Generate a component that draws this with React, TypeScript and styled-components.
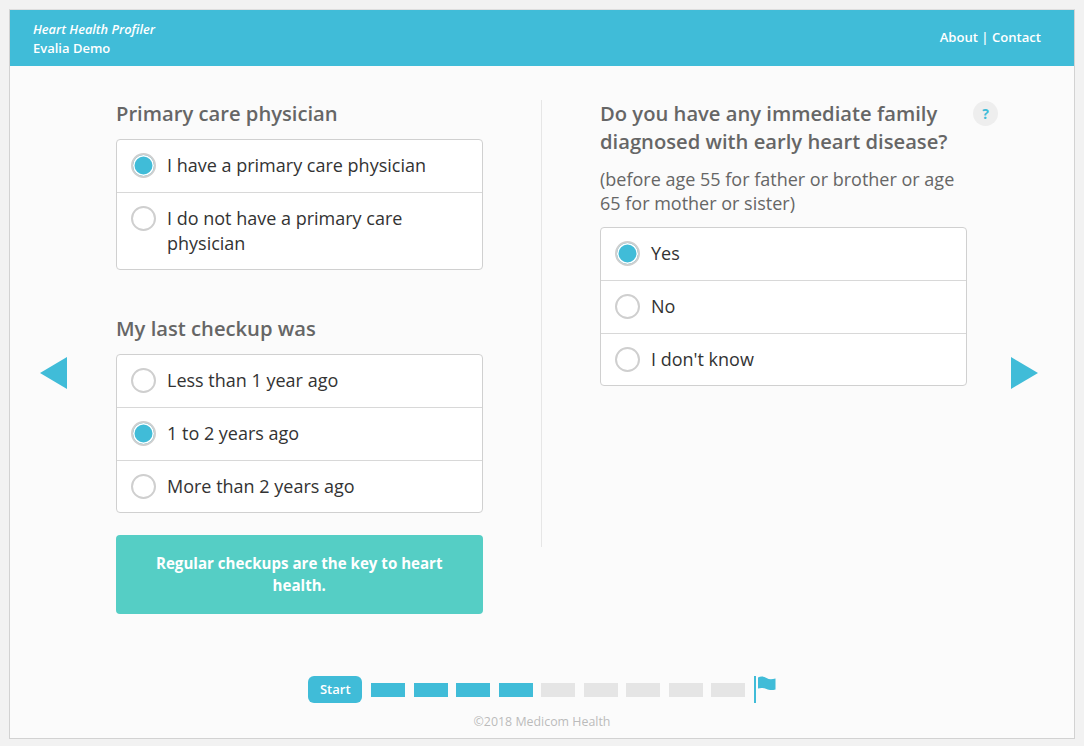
import React from 'react';
import styled, { createGlobalStyle } from 'styled-components';

const BLUE = '#40bcd8';

const GlobalStyle = createGlobalStyle`
  html, body {
    margin: 0;
    padding: 0;
    background: #f2f2f2;
    font-family: "Open Sans", "Noto Sans", sans-serif;
  }
  * { box-sizing: border-box; }
`;

const Frame = styled.div`
  width: 1066px;
  height: 730px;
  margin: 9px 0 0 9px;
  border: 1px solid #d2d2d2;
  border-top-color: #dedede;
  background: #fbfbfb;
  display: flex;
  flex-direction: column;
`;

const Header = styled.header`
  height: 56px;
  background: ${BLUE};
  color: #fff;
  display: flex;
  justify-content: space-between;
  align-items: center;
  padding: 0 33px 0 23px;
  font-size: 13px;
  font-weight: 600;
`;

const Brand = styled.div`
  line-height: 19px;
  margin-top: 1px;
`;

const BrandTitle = styled.div`
  font-size: 12.8px;
  font-style: italic;
`;

const Links = styled.nav`
  font-size: 13.1px;
  margin-top: -3px;
`;

const Main = styled.main`
  flex: 1;
  display: flex;
  align-items: center;
  padding: 0 36px 0 30px;
`;

const Arrow = styled.svg`
  width: 27px;
  height: 32px;
  flex: none;
  fill: ${BLUE};
`;

const Columns = styled.div`
  flex: 1;
  display: flex;
  align-self: flex-start;
  margin: 34px 0 0 49px;
`;

const Column = styled.section`
  position: relative;
  width: 366.5px;
  flex: none;
`;

const Divider = styled.div`
  width: 1px;
  height: 447px;
  margin: 0 58px 0 58.5px;
  background: #e6e6e6;
`;

const Title = styled.h2`
  margin: -1px 0 0;
  color: #666;
  font-size: 20.2px;
  font-weight: 600;
  line-height: 28px;
`;

const Note = styled.p`
  margin: 13px 0 0;
  color: #666;
  font-size: 18px;
  line-height: 23.5px;
`;

const Group = styled.div`
  margin: 12px 0 0;
  background: #fff;
  border: 1px solid #d0d0d0;
  border-radius: 4px;
  overflow: hidden;
`;

const Option = styled.label`
  display: flex;
  align-items: flex-start;
  padding: 13px 14px 14px;
  color: #333;
  font-size: 18px;
  line-height: 25px;
  & + & {
    border-top: 1px solid #d8d8d8;
  }
  &:last-child {
    padding-bottom: 13px;
  }
`;

const Radio = styled.span<{ $on?: boolean }>`
  width: 25px;
  height: 25px;
  flex: none;
  margin-right: 11px;
  border-radius: 50%;
  border: 2px solid #cfcfcf;
  background: ${p => (p.$on ? BLUE : '#fff')};
  box-shadow: ${p => (p.$on ? 'inset 0 0 0 1.5px #fff' : 'none')};
`;

const Spaced = styled.div`
  margin-top: 45px;
`;

const Banner = styled.div`
  margin-top: 22px;
  height: 79px;
  padding: 0 30px 2px;
  display: flex;
  align-items: center;
  justify-content: center;
  text-align: center;
  background: #55cec5;
  border-radius: 4px;
  color: #fff;
  font-size: 15.1px;
  font-weight: 700;
  line-height: 22px;
`;

const Help = styled.span`
  position: absolute;
  top: 1px;
  right: -31.5px;
  width: 25px;
  height: 25px;
  border-radius: 50%;
  background: #eeeeee;
  color: ${BLUE};
  font-size: 14px;
  font-weight: 700;
  display: flex;
  align-items: center;
  justify-content: center;
`;

const Footer = styled.footer`
  height: 62px;
  margin-top: -3px;
  display: flex;
  flex-direction: column;
  align-items: center;
`;

const Progress = styled.div`
  display: flex;
  align-items: center;
  height: 27px;
`;

const Start = styled.span`
  width: 54px;
  height: 27px;
  margin-right: 9px;
  padding-bottom: 2px;
  border-radius: 6px;
  background: ${BLUE};
  color: #fff;
  font-size: 13px;
  font-weight: 600;
  display: flex;
  align-items: center;
  justify-content: center;
`;

const Step = styled.span<{ $done?: boolean }>`
  width: 34px;
  height: 14px;
  margin-right: 8.5px;
  background: ${p => (p.$done ? BLUE : '#e5e5e5')};
`;

const Flag = styled.svg`
  width: 23px;
  height: 27px;
  margin-right: -1px;
  fill: ${BLUE};
`;

const Copyright = styled.div`
  margin-top: 10px;
  color: #bbb;
  font-size: 12.4px;
  line-height: 17px;
`;

function Choices({ options, selected }: { options: string[]; selected: number }) {
  return (
    <Group>
      {options.map((text, i) => (
        <Option key={text}>
          <Radio $on={i === selected} />
          <span>{text}</span>
        </Option>
      ))}
    </Group>
  );
}

export default function App() {
  return (
    <>
      <GlobalStyle />
      <Frame>
        <Header>
          <Brand>
            <BrandTitle>Heart Health Profiler</BrandTitle>
            <div>Evalia Demo</div>
          </Brand>
          <Links>About | Contact</Links>
        </Header>
        <Main>
          <Arrow viewBox="0 0 27 32">
            <polygon points="27,0 27,32 0,16" />
          </Arrow>
          <Columns>
            <Column>
              <Title>Primary care physician</Title>
              <Choices
                options={['I have a primary care physician', 'I do not have a primary care physician']}
                selected={0}
              />
              <Spaced>
                <Title>My last checkup was</Title>
                <Choices options={['Less than 1 year ago', '1 to 2 years ago', 'More than 2 years ago']} selected={1} />
              </Spaced>
              <Banner>Regular checkups are the key to heart health.</Banner>
            </Column>
            <Divider />
            <Column>
              <Title>Do you have any immediate family diagnosed with early heart disease?</Title>
              <Help>?</Help>
              <Note>(before age 55 for father or brother or age 65 for mother or sister)</Note>
              <Choices options={['Yes', 'No', "I don't know"]} selected={0} />
            </Column>
          </Columns>
          <Arrow viewBox="0 0 27 32">
            <polygon points="0,0 0,32 27,16" />
          </Arrow>
        </Main>
        <Footer>
          <Progress>
            <Start>Start</Start>
            {Array.from({ length: 9 }, (_, i) => (
              <Step key={i} $done={i < 4} />
            ))}
            <Flag viewBox="0 0 23 27">
              <rect x="0" y="0" width="2" height="27" />
              <path d="M4 1.5c3-1.5 6-1 8.500 .5s5 1.500 9 .5v11c-4 1-6.500 .5-9-.5s-5.500-1.500-8.500-.5z" />
            </Flag>
          </Progress>
          <Copyright>©2018 Medicom Health</Copyright>
        </Footer>
      </Frame>
    </>
  );
}
